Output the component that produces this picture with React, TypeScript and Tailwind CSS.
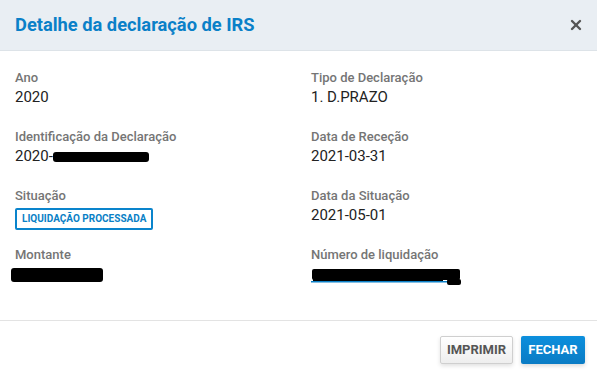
import { X } from "lucide-react";

const font = { fontFamily: "Roboto, 'Liberation Sans', sans-serif" };

function Field({ label, children }: { label: string; children: React.ReactNode }) {
  return (
    <div className="h-[59px]">
      <div className="h-[18px] text-[13px] leading-[18px] font-medium text-[#757575]">{label}</div>
      <div className="text-[15px] leading-[20px] text-[#222]">{children}</div>
    </div>
  );
}

// black marker used to hide personal data in the screenshot
function Redacted({ w, h, className = "" }: { w: number; h: number; className?: string }) {
  return (
    <svg width={w} height={h} viewBox={`0 0 ${w} ${h}`} className={className}>
      <rect x="0" y="0" width={w} height={h} rx="3" fill="#000" />
    </svg>
  );
}

export default function App() {
  return (
    <div className="w-[597px] h-[376px] bg-white flex flex-col" style={font}>
      <header className="h-[51px] shrink-0 bg-[#e9eef3] border-b border-[#dde3e8] flex items-center justify-between pl-[15px] pr-[13px]">
        <h1 className="text-[18.3px] font-bold text-[#0a80c8]">Detalhe da declaração de IRS</h1>
        <X size={16} strokeWidth={3.6} className="text-[#555]" />
      </header>

      <div className="flex-1 grid grid-cols-[296px_1fr] content-start px-[15px] pt-[18px] border-b border-[#e3e3e3]">
        <Field label="Ano">2020</Field>
        <Field label="Tipo de Declaração">1. D.PRAZO</Field>

        <Field label="Identificação da Declaração">
          <span className="inline-flex items-center">
            2020-
            <Redacted w={96} h={10} className="mt-[2px]" />
          </span>
        </Field>
        <Field label="Data de Receção">2021-03-31</Field>

        <div className="h-[59px]">
          <div className="h-[18px] text-[13px] leading-[18px] font-medium text-[#757575]">Situação</div>
          <span className="inline-block border-2 border-[#0a84cc] rounded-[2px] px-[5px] h-[22px] leading-[18px] text-[10px] font-bold text-[#0a7fc6]">
            LIQUIDAÇÃO PROCESSADA
          </span>
        </div>
        <Field label="Data da Situação">2021-05-01</Field>

        <div className="h-[59px]">
          <div className="h-[18px] text-[13px] leading-[18px] font-medium text-[#757575]">Montante</div>
          <Redacted w={92} h={14} className="-ml-[4px] mt-[4px]" />
        </div>
        <div className="h-[59px]">
          <div className="h-[18px] text-[13px] leading-[18px] font-medium text-[#757575]">Número de liquidação</div>
          <svg width="152" height="19" viewBox="0 0 152 19" className="mt-[3px]">
            <rect x="0" y="14" width="150" height="1.5" fill="#0a7fc6" />
            <rect x="1" y="2" width="148" height="11" rx="2" fill="#000" />
            <rect x="2" y="11" width="130" height="3" fill="#000" />
            <rect x="136" y="12" width="14" height="6" rx="2" fill="#000" />
          </svg>
        </div>
      </div>

      <footer className="h-[55px] shrink-0 flex items-start justify-end gap-2 pt-[15px] pr-[12px]">
        <button className="h-[28px] w-[73px] rounded-[2px] border border-[#cfcfcf] bg-gradient-to-b from-white to-[#eeeeee] shadow-[0_2px_4px_rgba(0,0,0,0.12)] text-[13px] font-bold text-[#555]">
          IMPRIMIR
        </button>
        <button className="h-[28px] w-[64px] rounded-[2px] bg-gradient-to-b from-[#0c8fdd] to-[#0a7bc4] shadow-[0_2px_4px_rgba(0,0,0,0.15)] text-[13px] font-bold text-white">
          FECHAR
        </button>
      </footer>
    </div>
  );
}
